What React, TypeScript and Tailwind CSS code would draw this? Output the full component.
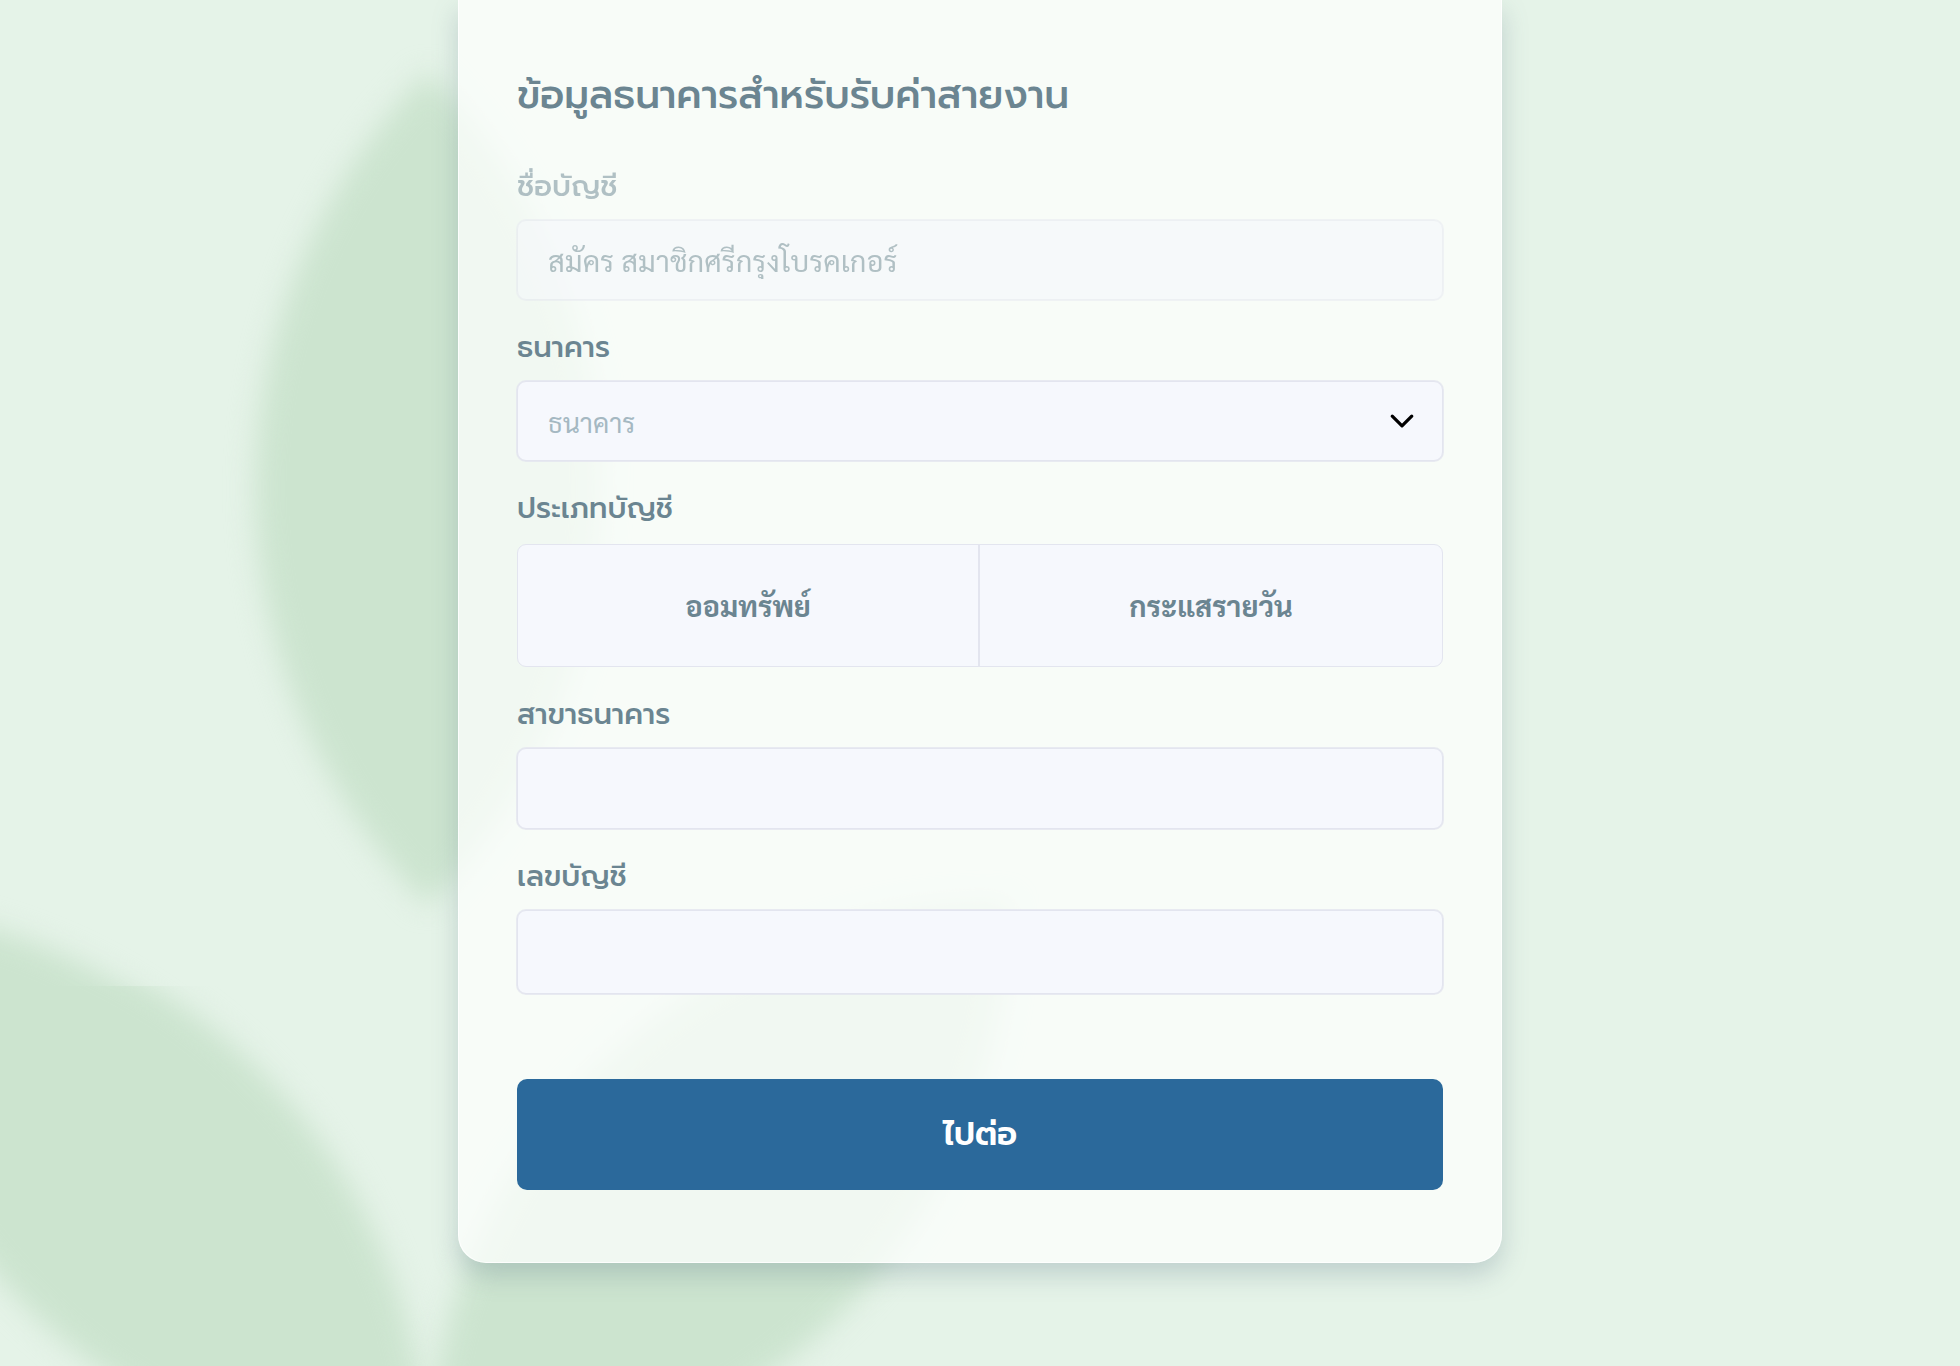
import { useState, type ReactNode } from 'react';

const fieldBox =
  "block w-full rounded-[9px] border border-[#e3e5ef] bg-[#f6f8fd] px-[30px] font-['Sarabun','Noto_Sans_Thai_Looped',sans-serif] ring-1 ring-[#e3e5ef]/80 outline-none";

const labelText = 'block text-[29px] leading-[44px] font-medium';

function Leaves() {
  return (
    <svg
      aria-hidden="true"
      className="pointer-events-none absolute top-0 left-0 h-[1480px] w-[1200px]"
      viewBox="0 0 1200 1480"
      fill="#cce4cf"
    >
      <defs>
        <filter id="soft" x="-20%" y="-20%" width="140%" height="140%" colorInterpolationFilters="sRGB">
          <feGaussianBlur stdDeviation="14" />
        </filter>
        <clipPath id="upper">
          <rect x="0" y="0" width="1200" height="986" />
        </clipPath>
        <clipPath id="lower">
          <rect x="0" y="986" width="1200" height="494" />
        </clipPath>
      </defs>
      <path filter="url(#soft)" d="M428 72A590 590 0 0 0 428 906A590 590 0 0 0 428 72Z" />
      <g clipPath="url(#upper)">
        <path filter="url(#soft)" transform="translate(-28 0)" d="M428 1480A570 570 0 0 0 -152 905A600 600 0 0 0 428 1480Z" />
      </g>
      <g clipPath="url(#lower)">
        <path filter="url(#soft)" d="M428 1480A570 570 0 0 0 -152 905A600 600 0 0 0 428 1480Z" />
      </g>
      <path filter="url(#soft)" d="M428 1480A570 570 0 0 1 1008 903A570 570 0 0 1 428 1480Z" />
    </svg>
  );
}

function Field({ id, label, disabled = false, children }: { id: string; label: string; disabled?: boolean; children: ReactNode }) {
  return (
    <div className={disabled ? 'flex flex-col gap-3 opacity-50' : 'flex flex-col gap-3'}>
      <label htmlFor={id} className={labelText}>
        {label}
      </label>
      {children}
    </div>
  );
}

function AccountTypes() {
  const [value, setValue] = useState('');
  const types = ['ออมทรัพย์', 'กระแสรายวัน'];
  return (
    <fieldset>
      <legend className={labelText}>ประเภทบัญชี</legend>
      <div className="mt-3.5 grid h-[123px] grid-cols-2 divide-x-2 divide-[#e3e5ef] overflow-hidden rounded-[9px] border border-[#e3e5ef] bg-[#f6f8fd]">
        {types.map((type) => (
          <label
            key={type}
            className="flex cursor-pointer items-center justify-center font-['Sarabun','Noto_Sans_Thai_Looped',sans-serif] text-[29px] font-bold has-checked:bg-[#e3ecf7]"
          >
            <input
              type="radio"
              name="account-type"
              value={type}
              checked={value === type}
              onChange={() => setValue(type)}
              className="sr-only"
            />
            {type}
          </label>
        ))}
      </div>
    </fieldset>
  );
}

export default function App() {
  return (
    <main className="relative min-h-screen overflow-hidden bg-[#e5f3e8] pb-[102px] font-['Prompt','Noto_Sans_Thai',sans-serif] text-[#6b8591]">
      <Leaves />
      <form
        onSubmit={(event) => event.preventDefault()}
        className="relative mx-auto w-full max-w-[1044px] rounded-b-[28px] border border-t-0 border-white/80 bg-[#fdfffd]/75 px-[58px] pt-[66px] pb-[72px] shadow-[0_12px_26px_rgba(95,120,138,0.28)]"
      >
        <h1 className="mb-10 text-[39px] leading-[58px] font-medium">ข้อมูลธนาคารสำหรับรับค่าสายงาน</h1>

        <div className="flex flex-col gap-[25px]">
          <Field id="account-name" label="ชื่อบัญชี" disabled>
            <input
              id="account-name"
              type="text"
              disabled
              defaultValue="สมัคร สมาชิกศรีกรุงโบรคเกอร์"
              className={`${fieldBox} h-20 text-[29px]`}
            />
          </Field>

          <Field id="bank" label="ธนาคาร">
            <div className="relative">
              <select id="bank" defaultValue="" className={`${fieldBox} h-20 appearance-none pt-0.5 text-[27px] text-[#a5b8c2]`}>
                <option value="">ธนาคาร</option>
              </select>
              <svg
                aria-hidden="true"
                className="pointer-events-none absolute inset-y-0 right-7 my-auto size-[26px]"
                viewBox="0 0 16 16"
                fill="none"
                stroke="#000"
                strokeWidth="2"
                strokeLinecap="round"
                strokeLinejoin="round"
              >
                <path d="M2 5l6 6 6-6" />
              </svg>
            </div>
          </Field>

          <AccountTypes />

          <Field id="branch" label="สาขาธนาคาร">
            <input id="branch" type="text" className={`${fieldBox} h-[81px] text-[29px]`} />
          </Field>

          <Field id="account-number" label="เลขบัญชี">
            <input id="account-number" type="text" inputMode="numeric" className={`${fieldBox} h-[84px] text-[29px]`} />
          </Field>
        </div>

        <button
          type="submit"
          className="mt-[85px] flex h-[111px] w-full cursor-pointer items-center justify-center rounded-[10px] bg-[#2b699b] text-[32px] font-semibold text-white"
        >
          ไปต่อ
        </button>
      </form>
    </main>
  );
}
